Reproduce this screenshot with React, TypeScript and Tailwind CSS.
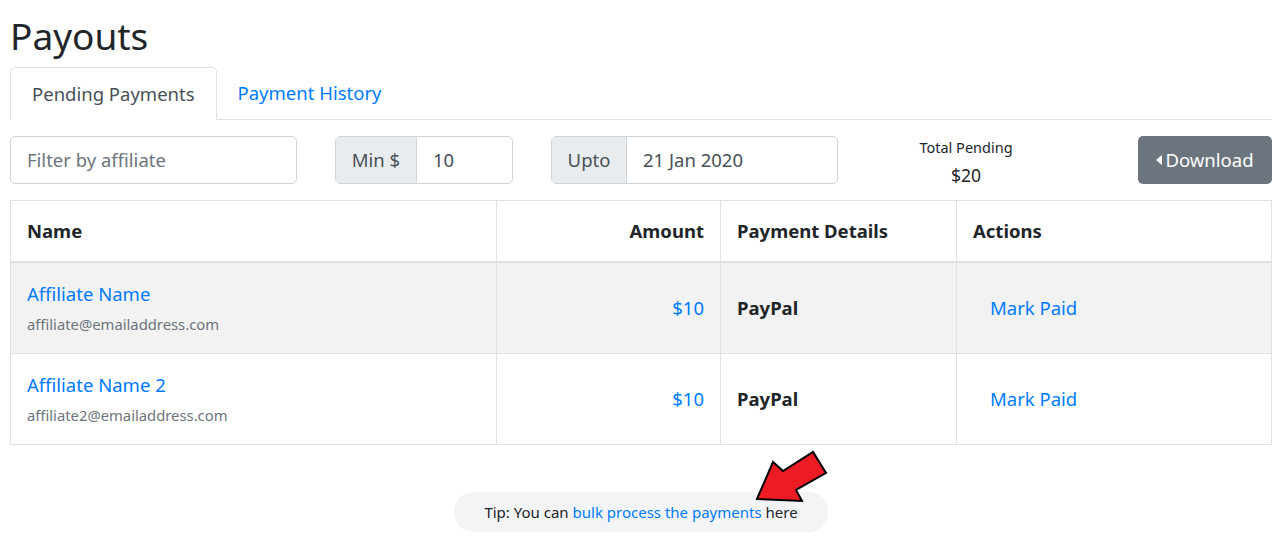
import React from "react"

const rows = [
  { name: "Affiliate Name", email: "affiliate@emailaddress.com", amount: "$10", method: "PayPal" },
  { name: "Affiliate Name 2", email: "affiliate2@emailaddress.com", amount: "$10", method: "PayPal" },
]

function Arrow() {
  return (
    <svg
      className="absolute left-[740px] top-[-46px]"
      width="84"
      height="62"
      viewBox="750 445 84 62"
    >
      <polygon
        points="757,498 773,461 783,470 813,451 826,472 796,489 802,500"
        fill="#ed1c24"
        stroke="#000"
        strokeWidth="2"
        strokeLinejoin="miter"
      />
    </svg>
  )
}

export default function App() {
  return (
    <div className="min-h-screen bg-white px-[10px] pt-[12px] text-[#212529] font-['Noto_Sans',sans-serif]">
      <h1 className="text-[37px] leading-[48px] mb-[7px]">Payouts</h1>

      {/* tabs */}
      <div className="flex border-b border-[#dee2e6]">
        <div className="-mb-px rounded-t-[5px] border border-[#dee2e6] border-b-white bg-white px-[21px] pt-[11px] pb-[10px] text-[18.5px] leading-[30px] text-[#495057]">
          Pending Payments
        </div>
        <div className="px-[21px] pt-[11px] pb-[10px] text-[18.5px] leading-[30px] text-[#007bff]">Payment History</div>
      </div>

      {/* filters */}
      <div className="mt-[16px] flex h-[48px] items-start text-[18.5px]">
        <div className="flex h-[48px] w-[287px] items-center rounded-[5px] border border-[#ced4da] px-[16px] text-[#6c757d]">
          Filter by affiliate
        </div>
        <div className="ml-[38px] flex h-[48px] w-[178px] rounded-[5px] border border-[#ced4da]">
          <div className="flex w-[81px] items-center justify-center border-r border-[#ced4da] bg-[#e9ecef] text-[#495057]">
            Min $
          </div>
          <div className="flex flex-1 items-center px-[16px] text-[#495057]">10</div>
        </div>
        <div className="ml-[38px] flex h-[48px] w-[287px] rounded-[5px] border border-[#ced4da]">
          <div className="flex w-[75px] items-center justify-center border-r border-[#ced4da] bg-[#e9ecef] text-[#495057]">
            Upto
          </div>
          <div className="flex flex-1 items-center px-[16px] text-[#495057]">21 Jan 2020</div>
        </div>
        <div className="ml-[38px] h-[48px] w-[180px] text-center">
          <div className="text-[14.5px] leading-[22px]">Total Pending</div>
          <div className="mt-[5px] text-[17.5px] leading-[24px]">$20</div>
        </div>
        <div className="flex-1" />
        <button className="flex h-[48px] w-[134px] items-center justify-center gap-[3px] rounded-[5px] bg-[#6c757d] text-[18.5px] text-white">
          <svg width="6" height="10" viewBox="0 0 6 10">
            <polygon points="6,0 6,10 0,5" fill="#fff" />
          </svg>
          Download
        </button>
      </div>

      {/* table */}
      <table className="mt-[16px] w-full border-collapse border border-[#dee2e6] text-[18.5px] leading-[30px]">
        <thead>
          <tr>
            <th className="w-[486px] border border-b-2 border-[#dee2e6] px-[16px] pt-[15px] pb-[15px] text-left font-bold">Name</th>
            <th className="w-[224px] border border-b-2 border-[#dee2e6] px-[16px] pt-[15px] pb-[15px] text-right font-bold">Amount</th>
            <th className="w-[236px] border border-b-2 border-[#dee2e6] px-[16px] pt-[15px] pb-[15px] text-left font-bold">Payment Details</th>
            <th className="border border-b-2 border-[#dee2e6] px-[16px] pt-[15px] pb-[15px] text-left font-bold">Actions</th>
          </tr>
        </thead>
        <tbody>
          {rows.map((r, i) => (
            <tr key={r.email} className={i % 2 === 0 ? "bg-[#f2f2f2]" : "bg-white"}>
              <td className="border border-[#dee2e6] px-[16px] pt-[16px] pb-[14px]">
                <div className="text-[#007bff]">{r.name}</div>
                <div className="text-[14.8px] leading-[30px] text-[#6c757d]">{r.email}</div>
              </td>
              <td className="border border-[#dee2e6] px-[16px] text-right text-[#007bff]">{r.amount}</td>
              <td className="border border-[#dee2e6] px-[16px] font-bold">{r.method}</td>
              <td className="border border-[#dee2e6] px-[16px]">
                <span className="ml-[17px] text-[#007bff]">Mark Paid</span>
              </td>
            </tr>
          ))}
        </tbody>
      </table>

      {/* tip */}
      <div className="relative mt-[47px] flex justify-center">
        <div className="flex h-[40px] items-center rounded-full bg-[#f3f4f6] px-[30px] text-[15px]">
          Tip: You can&nbsp;<span className="text-[#007bff]">bulk process the payments</span>&nbsp;here
        </div>
        <Arrow />
      </div>
    </div>
  )
}
